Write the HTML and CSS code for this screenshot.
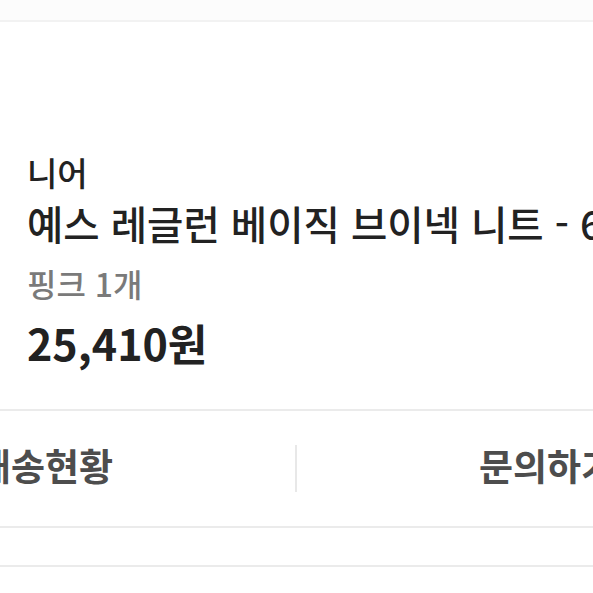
FILE: index.html
```html
<!DOCTYPE html>
<html lang="ko">
<head>
<meta charset="utf-8">
<link rel="stylesheet" href="styles.css">
</head>
<body>
<div class="page">
  <div class="topbar"></div>
  <section class="order-item">
    <div class="brand">니어</div>
    <div class="title">예스 레글런 베이직 브이넥 니트 - 6</div>
    <div class="option">핑크 1개</div>
    <div class="price">25,410원</div>
  </section>
  <div class="actions">
    <div class="action">배송현황</div>
    <div class="divider"></div>
    <div class="action">문의하기</div>
  </div>
  <div class="spacer"></div>
  <div class="footer"></div>
</div>
</body>
</html>
```
FILE: styles.css
```css
html, body {
  margin: 0;
  padding: 0;
  background: #ffffff;
}
body {
  width: 593px;
  height: 593px;
  overflow: hidden;
  font-family: "Noto Sans CJK KR", "Noto Sans", sans-serif;
}
.page {
  width: 593px;
}
.topbar {
  height: 20px;
  background: #fcfcfc;
  border-bottom: 2px solid #f2f2f2;
}
.order-item {
  box-sizing: border-box;
  height: 387px;
  padding: 130px 0 0 27px;
  white-space: nowrap;
  color: #222222;
}
.brand {
  font-size: 33px;
  line-height: 40px;
  font-weight: 500;
}
.title {
  font-size: 39.5px;
  line-height: 50px;
  margin-top: 6px;
  font-weight: 500;
}
.option {
  font-size: 32px;
  line-height: 44px;
  color: #7a7a7a;
  margin-top: 13px;
  font-weight: 500;
}
.price {
  font-size: 43px;
  line-height: 50px;
  font-weight: 700;
  margin-top: 12px;
}
.actions {
  box-sizing: border-box;
  border-top: 2px solid #ebebeb;
  border-bottom: 2px solid #ebebeb;
  height: 119px;
  width: 1002px;
  margin-left: -205px;
  padding-bottom: 8px;
  display: flex;
  align-items: center;
}
.action {
  flex: 1;
  text-align: center;
  font-size: 37px;
  font-weight: 700;
  color: #4d4d4d;
}
.divider {
  width: 2px;
  height: 47px;
  margin-top: 8px;
  background: #e8e8e8;
}
.spacer {
  height: 37px;
}
.footer {
  border-top: 2px solid #ebebeb;
  height: 40px;
}
```
